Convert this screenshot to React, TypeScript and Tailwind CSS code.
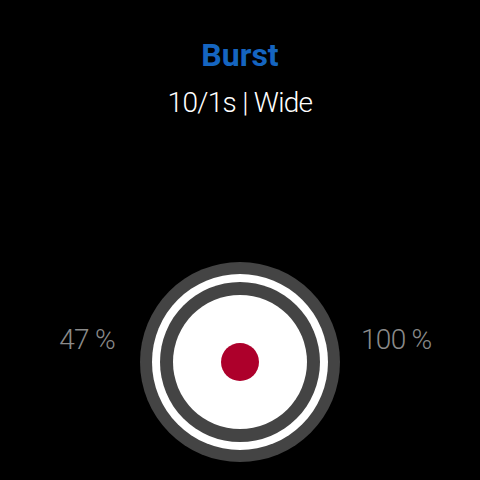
import React from 'react';

const font = { fontFamily: 'Roboto, "Noto Sans", sans-serif' };

const ShutterButton: React.FC = () => (
  <div className="w-[200px] h-[200px] rounded-full bg-[#444444] p-[12px] shrink-0">
    <div className="w-full h-full rounded-full bg-white p-[8px]">
      <div className="w-full h-full rounded-full bg-[#444444] p-[13px]">
        <div className="w-full h-full rounded-full bg-white flex items-center justify-center">
          <div className="w-[38px] h-[38px] rounded-full bg-[#ad002b]" />
        </div>
      </div>
    </div>
  </div>
);

export default function App() {
  return (
    <div className="w-[480px] h-[480px] bg-black flex flex-col items-center overflow-hidden" style={font}>
      <div className="pt-[39px] text-[32px] leading-[32px] font-bold text-[#1565c0]">Burst</div>
      <div className="mt-[18px] text-[28px] leading-[28px] font-light text-white tracking-[-0.7px]">10/1s | Wide</div>

      {/* shutter row */}
      <div className="mt-[145px] flex items-start justify-center w-full">
        <div className="w-[100px] mr-[25px] mt-[64px] text-right text-[28px] leading-[28px] font-light text-[#8a8a8a] tracking-[-0.7px]">
          47 %
        </div>
        <ShutterButton />
        <div className="w-[100px] ml-[21px] mr-[4px] mt-[64px] text-left text-[28px] leading-[28px] font-light text-[#8a8a8a] tracking-[-0.7px]">
          100 %
        </div>
      </div>
    </div>
  );
}
